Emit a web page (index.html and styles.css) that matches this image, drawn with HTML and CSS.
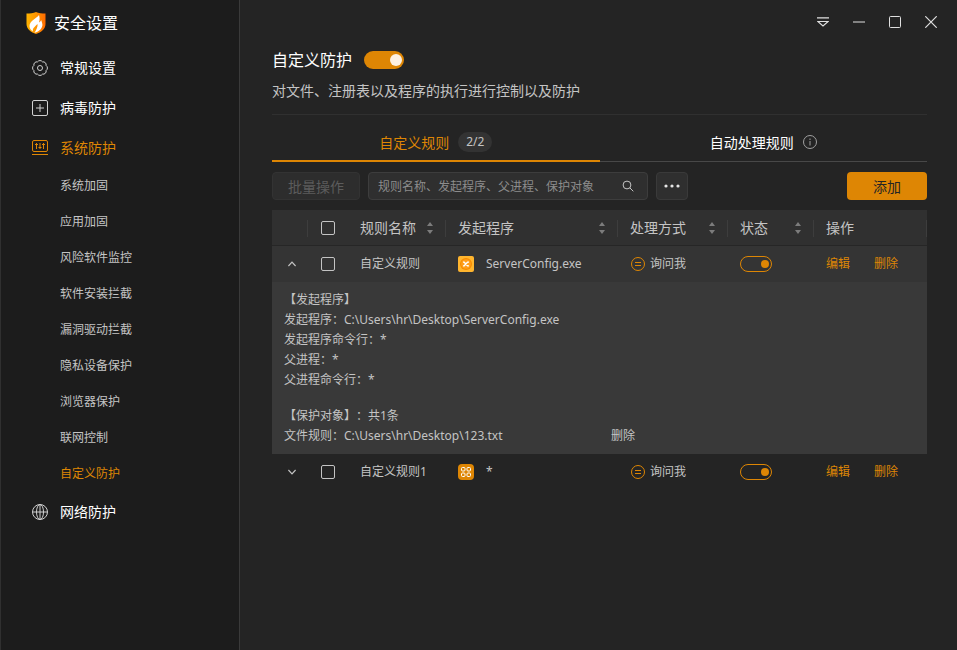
FILE: index.html
```
<!DOCTYPE html>
<html lang="zh-CN">
<head>
    <meta charset="UTF-8">
    <meta name="viewport" content="width=device-width, initial-scale=1.0">
    <title>安全设置</title>
    <link rel="stylesheet" href="styles.css">
</head>
<body>
    <aside class="sidebar">
        <div class="brand">
            <svg width="20" height="22" viewBox="0 0 20 22">
                <defs>
                    <linearGradient id="shield" x1="0" y1="0" x2="1" y2="0">
                        <stop offset="0" stop-color="#ffb400"/>
                        <stop offset=".5" stop-color="#ff9500"/>
                        <stop offset="1" stop-color="#ff6a00"/>
                    </linearGradient>
                </defs>
                <path d="M10 0C12.500 1.300 16 1.600 19.500 1.600V12C19.500 17 15 20.500 10 22C5 20.500 .5 17 .5 12V1.600C4 1.600 7.500 1.300 10 0Z" fill="url(#shield)"/>
                <path d="M13 3C11 6 3.500 9 3.500 14C3.500 16.500 5 18.500 7 19.500C6.200 16.500 8.500 15 11.500 12C12 14.500 10.500 17.500 8.500 20.800C13.500 19.500 16.600 16 16.400 12.500C16.200 10.500 15.500 9.500 15.200 8C14.700 9.300 14 10 13 10.500C13.800 8 13.800 5.500 13 3Z" fill="#fff"/>
            </svg>
            <span>安全设置</span>
        </div>
        <nav>
            <a class="nav-item" href="#">
                <svg width="16" height="16" viewBox="0 0 16 16">
                    <path d="M5.500 1.900A3 3 0 0 1 10.500 1.900A3 3 0 0 1 14.100 5.500A3 3 0 0 1 14.100 10.500A3 3 0 0 1 10.500 14.100A3 3 0 0 1 5.500 14.100A3 3 0 0 1 1.900 10.500A3 3 0 0 1 1.900 5.500A3 3 0 0 1 5.500 1.900Z"/>
                    <circle cx="8" cy="8" r="2.500"/>
                </svg>
                <span>常规设置</span>
            </a>
            <a class="nav-item" href="#">
                <svg width="16" height="16" viewBox="0 0 16 16">
                    <rect x=".5" y=".5" width="15" height="15" rx="1.500"/>
                    <path d="M4 8H12M8 4V12"/>
                </svg>
                <span>病毒防护</span>
            </a>
            <a class="nav-item active" href="#">
                <svg width="16" height="16" viewBox="0 0 16 16">
                    <rect x=".5" y=".5" width="15" height="11" rx="1.500"/>
                    <path d="M0 14.500H16M4.500 3V9M8 3V9M11.500 3V9M3 4.500H6M6.500 7.500H9.500M10 4.500H13"/>
                </svg>
                <span>系统防护</span>
            </a>
            <div class="sub-nav">
                <a href="#">系统加固</a>
                <a href="#">应用加固</a>
                <a href="#">风险软件监控</a>
                <a href="#">软件安装拦截</a>
                <a href="#">漏洞驱动拦截</a>
                <a href="#">隐私设备保护</a>
                <a href="#">浏览器保护</a>
                <a href="#">联网控制</a>
                <a class="active" href="#">自定义防护</a>
            </div>
            <a class="nav-item" href="#">
                <svg width="16" height="16" viewBox="0 0 16 16">
                    <circle cx="8" cy="8" r="7.500"/>
                    <ellipse cx="8" cy="8" rx="3.500" ry="7.500"/>
                    <path d="M.5 8H15.500M8 .5V15.500"/>
                </svg>
                <span>网络防护</span>
            </a>
        </nav>
    </aside>

    <main>
        <div class="window-bar">
            <button type="button" aria-label="菜单"><svg width="12" height="12" viewBox="0 0 12 12"><path d="M0 1.800H12M.8 5.500H11.200L6 9.900Z" stroke-width="1.200"/></svg></button>
            <button type="button" aria-label="最小化"><svg width="12" height="12" viewBox="0 0 12 12"><path d="M0 6H12"/></svg></button>
            <button type="button" aria-label="最大化"><svg width="12" height="12" viewBox="0 0 12 12"><rect x=".5" y=".5" width="11" height="11" rx="1"/></svg></button>
            <button type="button" aria-label="关闭"><svg width="12" height="12" viewBox="0 0 12 12"><path d="M.3 .3L11.700 11.700M11.700 .3L.3 11.700" stroke-width="1.200"/></svg></button>
        </div>

        <div class="content">
            <header class="page-head">
                <div class="title-row">
                    <h1><label for="protect">自定义防护</label></h1>
                    <input type="checkbox" id="protect" class="switch" checked>
                </div>
                <p>对文件、注册表以及程序的执行进行控制以及防护</p>
            </header>

            <div class="tabs">
                <button type="button" class="tab active">自定义规则 <span class="count">2/2</span></button>
                <button type="button" class="tab">自动处理规则
                    <svg width="14" height="14" viewBox="0 0 14 14"><circle cx="7" cy="7" r="6.500"/><path d="M7 6V10.500M7 3.500V5"/></svg>
                </button>
            </div>

            <div class="toolbar">
                <button type="button" class="batch" disabled>批量操作</button>
                <div class="search">
                    <input type="text" aria-label="搜索" placeholder="规则名称、发起程序、父进程、保护对象">
                    <svg width="12" height="12" viewBox="0 0 12 12"><circle cx="5" cy="5" r="3.900"/><path d="M7.800 7.800L11.300 11.300"/></svg>
                </div>
                <button type="button" class="more" aria-label="更多"><svg width="16" height="4" viewBox="0 0 16 4"><circle cx="2" cy="2" r="1.600"/><circle cx="8" cy="2" r="1.600"/><circle cx="14" cy="2" r="1.600"/></svg></button>
                <button type="button" class="add">添加</button>
            </div>

            <table class="rules">
                <colgroup>
                    <col class="col-arrow">
                    <col class="col-check">
                    <col class="col-name">
                    <col class="col-program">
                    <col class="col-mode">
                    <col class="col-state">
                    <col class="col-action">
                </colgroup>
                <thead>
                    <tr>
                        <th></th>
                        <th><input type="checkbox" class="check" aria-label="全选"></th>
                        <th><div class="th-cell">规则名称 <svg class="sort" width="6" height="12" viewBox="0 0 6 12"><path d="M3 0L6 4H0ZM3 12L6 8H0Z"/></svg></div></th>
                        <th><div class="th-cell">发起程序 <svg class="sort" width="6" height="12" viewBox="0 0 6 12"><path d="M3 0L6 4H0ZM3 12L6 8H0Z"/></svg></div></th>
                        <th><div class="th-cell">处理方式 <svg class="sort" width="6" height="12" viewBox="0 0 6 12"><path d="M3 0L6 4H0ZM3 12L6 8H0Z"/></svg></div></th>
                        <th><div class="th-cell">状态 <svg class="sort" width="6" height="12" viewBox="0 0 6 12"><path d="M3 0L6 4H0ZM3 12L6 8H0Z"/></svg></div></th>
                        <th><div class="th-cell">操作</div></th>
                    </tr>
                </thead>
                <tbody>
                    <tr class="open">
                        <td><button type="button" class="arrow" aria-label="收起"><svg width="8" height="6" viewBox="0 0 8 6"><path d="M.4 5L4 1.200L7.600 5"/></svg></button></td>
                        <td><input type="checkbox" class="check" aria-label="选择自定义规则"></td>
                        <td>自定义规则</td>
                        <td>
                            <div class="program">
                                <svg width="16" height="16" viewBox="0 0 16 16">
                                    <rect width="16" height="16" rx="2" fill="#ffb52e"/>
                                    <circle cx="8" cy="8" r="6" fill="#f78c00"/>
                                    <circle cx="8" cy="8" r="4.800" fill="#ff9f1c"/>
                                    <path d="M5 6.200H6.200L9.500 9.800H11M5 9.800H6.200L9.500 6.200H11" fill="none" stroke="#fff" stroke-width="1.300"/>
                                </svg>
                                <span>ServerConfig.exe</span>
                            </div>
                        </td>
                        <td>
                            <div class="mode">
                                <svg width="14" height="14" viewBox="0 0 14 14"><circle cx="7" cy="7" r="6.500"/><path d="M4 5.500H10M4 8.500H10"/></svg>
                                <span>询问我</span>
                            </div>
                        </td>
                        <td><input type="checkbox" class="switch line" aria-label="启用自定义规则" checked></td>
                        <td><div class="actions"><a href="#">编辑</a><a href="#">删除</a></div></td>
                    </tr>
                    <tr class="detail">
                        <td colspan="7">
                            <div class="detail-block">
                                <p>【发起程序】</p>
                                <p>发起程序：C:\Users\hr\Desktop\ServerConfig.exe</p>
                                <p>发起程序命令行：*</p>
                                <p>父进程：*</p>
                                <p>父进程命令行：*</p>
                            </div>
                            <div class="detail-block">
                                <p>【保护对象】：共1条</p>
                                <div class="target">
                                    <p>文件规则：C:\Users\hr\Desktop\123.txt</p>
                                    <a href="#">删除</a>
                                </div>
                            </div>
                        </td>
                    </tr>
                    <tr>
                        <td><button type="button" class="arrow" aria-label="展开"><svg width="8" height="6" viewBox="0 0 8 6"><path d="M.4 1L4 4.800L7.600 1"/></svg></button></td>
                        <td><input type="checkbox" class="check" aria-label="选择自定义规则1"></td>
                        <td>自定义规则1</td>
                        <td>
                            <div class="program">
                                <svg width="16" height="16" viewBox="0 0 16 16">
                                    <rect width="16" height="16" rx="4" fill="#de8604"/>
                                    <g fill="none" stroke="#fff">
                                        <rect x="3.500" y="3.500" width="3.500" height="3.500" rx="1"/>
                                        <rect x="9" y="3.500" width="3.500" height="3.500" rx="1"/>
                                        <rect x="3.500" y="9" width="3.500" height="3.500" rx="1"/>
                                        <rect x="9" y="9" width="3.500" height="3.500" rx="1"/>
                                    </g>
                                </svg>
                                <span>*</span>
                            </div>
                        </td>
                        <td>
                            <div class="mode">
                                <svg width="14" height="14" viewBox="0 0 14 14"><circle cx="7" cy="7" r="6.500"/><path d="M4 5.500H10M4 8.500H10"/></svg>
                                <span>询问我</span>
                            </div>
                        </td>
                        <td><input type="checkbox" class="switch line" aria-label="启用自定义规则1" checked></td>
                        <td><div class="actions"><a href="#">编辑</a><a href="#">删除</a></div></td>
                    </tr>
                </tbody>
            </table>
        </div>
    </main>
</body>
</html>
```
FILE: styles.css
```
* {
    box-sizing: border-box;
}
body {
    margin: 0;
    min-height: 100vh;
    display: flex;
    background-color: #242424;
    color: #c4c4c4;
    font-family: "Noto Sans", "Noto Sans CJK SC", sans-serif;
    font-size: 12px;
    line-height: 20px;
    text-spacing-trim: space-all;
}
a {
    color: inherit;
    text-decoration: none;
}
h1, p {
    margin: 0;
    font-weight: normal;
}
button, input {
    margin: 0;
    padding: 0;
    font-family: inherit;
    font-size: inherit;
    color: inherit;
}
button {
    border: none;
    background: none;
    cursor: pointer;
}
svg {
    display: block;
    flex: none;
}

/* sidebar */
.sidebar {
    flex: none;
    width: 240px;
    background-color: #1c1c1c;
    border-left: 1px solid #303030;
    border-right: 1px solid #3a3a3a;
}
.brand {
    display: flex;
    align-items: center;
    gap: 8px;
    height: 48px;
    padding: 0 0 2px 25px;
    font-size: 16px;
    color: #fff;
}
.nav-item {
    display: flex;
    align-items: center;
    gap: 12px;
    height: 40px;
    padding-left: 31px;
    font-size: 14px;
    color: #fff;
}
.nav-item svg {
    fill: none;
    stroke: #d0d0d0;
}
.nav-item.active, .sub-nav .active {
    color: #de8604;
}
.nav-item.active svg {
    stroke: #de8604;
}
.sub-nav a {
    display: block;
    padding-left: 59px;
    line-height: 36px;
}

/* main area */
main {
    flex: 1;
    min-width: 0;
}
.window-bar {
    display: flex;
    justify-content: flex-end;
    height: 44px;
    padding-right: 8px;
}
.window-bar button {
    width: 36px;
    display: flex;
    align-items: center;
    justify-content: center;
}
.window-bar svg {
    fill: none;
    stroke: #e0e0e0;
}
.content {
    padding: 4px 30px 24px 32px;
}
.page-head {
    height: 67px;
    border-bottom: 1px solid #303030;
}
.title-row {
    display: flex;
    align-items: center;
    gap: 12px;
    height: 24px;
}
.page-head h1 {
    font-size: 16px;
    color: #fff;
}
.page-head p {
    margin-top: 9px;
    font-size: 14px;
}

.switch {
    appearance: none;
    display: flex;
    align-items: center;
    justify-content: flex-end;
    width: 40px;
    height: 18px;
    padding-right: 2px;
    border-radius: 9px;
    background-color: #de8604;
    cursor: pointer;
}
.switch::before {
    content: "";
    width: 12px;
    height: 12px;
    border-radius: 50%;
    background-color: #fdf1e2;
}
.switch:not(:checked) {
    justify-content: flex-start;
}
.switch.line {
    width: 32px;
    height: 16px;
    border: 1px solid #de8604;
    background: none;
}
.switch.line::before {
    width: 8px;
    height: 8px;
    background-color: #de8604;
}

/* tabs */
.tabs {
    display: flex;
    height: 47px;
    border-bottom: 1px solid #484848;
}
.tab {
    flex: 1;
    display: flex;
    align-items: center;
    justify-content: center;
    gap: 9px;
    height: 47px;
    padding-top: 8px;
    border-bottom: 2px solid transparent;
    font-size: 14px;
    color: #fff;
}
.tab.active {
    color: #de8604;
    border-bottom-color: #de8604;
}
.tab svg {
    fill: none;
    stroke: #a0a0a0;
}
.count {
    padding: 0 8px;
    border-radius: 10px;
    background-color: #333;
    font-size: 12px;
    line-height: 20px;
    color: #c4c4c4;
}

/* toolbar */
.toolbar {
    display: flex;
    gap: 8px;
    margin: 10px 0;
    height: 28px;
}
.toolbar button {
    border-radius: 4px;
    font-size: 14px;
}
.toolbar .batch {
    width: 88px;
    border: 1px solid #333;
    background-color: #2d2d2d;
    color: #5c5c5c;
    cursor: default;
}
.search {
    display: flex;
    align-items: center;
    width: 280px;
    padding: 0 13px 0 9px;
    border: 1px solid #3d3d3d;
    border-radius: 4px;
    background-color: #2f2f2f;
}
.search input {
    flex: 1;
    min-width: 0;
    border: none;
    outline: none;
    background: none;
}
.search input::placeholder {
    color: #8c8c8c;
}
.search svg {
    fill: none;
    stroke: #c4c4c4;
}
.toolbar .more {
    display: flex;
    align-items: center;
    justify-content: center;
    width: 32px;
    border: 1px solid #3a3a3a;
    background-color: #2f2f2f;
}
.more svg {
    fill: #e6e6e6;
}
.toolbar .add {
    width: 80px;
    margin-left: auto;
    background-color: #de8604;
    color: #242424;
}

/* rules table */
.rules {
    width: 100%;
    table-layout: fixed;
    border-collapse: collapse;
}
.col-arrow {
    width: 36px;
}
.col-check {
    width: 40px;
}
.col-name {
    width: 98px;
}
.col-mode {
    width: 110px;
}
.col-state {
    width: 86px;
}
.col-action {
    width: 113px;
}
.rules th, .rules td {
    height: 36px;
    padding: 0 0 0 12px;
    text-align: left;
    font-weight: normal;
}
.rules thead tr {
    background-color: #303030;
    box-shadow: inset 0 -1px #262626;
}
.rules th {
    font-size: 14px;
    background: linear-gradient(#3d3d3d, #3d3d3d) no-repeat right center / 1px 17px;
}
.rules th:nth-child(2) {
    background: none;
}
.th-cell {
    display: flex;
    align-items: center;
    justify-content: space-between;
    padding-right: 13px;
}
.sort {
    fill: #7c7c7c;
}
.rules .open {
    background-color: #343434;
}
.rules td:first-child {
    padding-left: 16px;
}
.arrow {
    display: block;
}
.arrow svg {
    fill: none;
    stroke: #c4c4c4;
    stroke-width: 1.2;
}
.check {
    appearance: none;
    display: block;
    width: 14px;
    height: 14px;
    margin-left: 1px;
    border: 1px solid #c4c4c4;
    border-radius: 2px;
    cursor: pointer;
}
.check:checked {
    background-color: #de8604;
}
.program {
    display: flex;
    align-items: center;
    gap: 12px;
}
.mode {
    display: flex;
    align-items: center;
    gap: 5px;
    padding-left: 1px;
}
.mode svg {
    fill: none;
    stroke: #de8604;
}
.actions {
    display: flex;
    gap: 24px;
    color: #de8604;
}
.rules .detail td {
    padding: 8px 12px;
    background-color: #393939;
}
.detail-block + .detail-block {
    margin-top: 16px;
}
.target {
    display: grid;
    grid-template-columns: 327px 1fr;
}
```
